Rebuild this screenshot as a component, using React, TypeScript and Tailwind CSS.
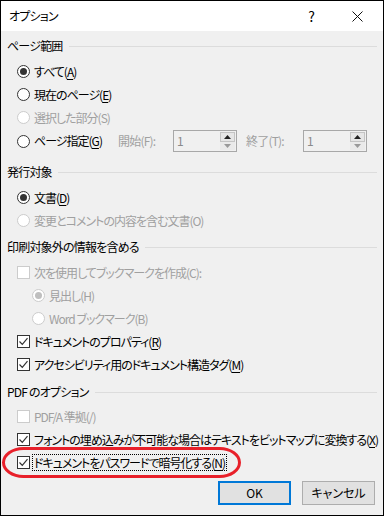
import React from "react";

function Key({ k }: { k: string }) {
  return (
    <>
      (<span className="underline underline-offset-2">{k}</span>)
    </>
  );
}

function Heading({ title, className = "" }: { title: string; className?: string }) {
  return (
    <div className={`flex h-[22px] items-center ${className}`}>
      <span className="whitespace-pre text-[12px] text-black">{title}</span>
      <div className="ml-[6px] h-px flex-1 bg-[#dcdcdc]" />
    </div>
  );
}

function Radio({ checked = false, disabled = false }: { checked?: boolean; disabled?: boolean }) {
  return (
    <span
      className={`flex h-[13px] w-[13px] shrink-0 items-center justify-center rounded-full border bg-white ${
        disabled ? "border-[#cccccc]" : "border-[#333333]"
      }`}
    >
      {checked && (
        <span
          className={`h-[7px] w-[7px] rounded-full ${disabled ? "bg-[#bfbfbf]" : "bg-[#333333]"}`}
        />
      )}
    </span>
  );
}

function Check({ checked = false, disabled = false }: { checked?: boolean; disabled?: boolean }) {
  return (
    <span
      className={`flex h-[13px] w-[13px] shrink-0 items-center justify-center border bg-white ${
        disabled ? "border-[#cccccc]" : "border-[#333333]"
      }`}
    >
      {checked && (
        <svg width="11" height="11" viewBox="0 0 11 11">
          <path d="M1.5 5.5 L4.3 8.3 L9.5 2.2" fill="none" stroke="#333333" strokeWidth="1.2" />
        </svg>
      )}
    </span>
  );
}

function Row({
  children,
  control,
  disabled = false,
  indent = "ml-[10px]",
  className = "",
}: {
  children: React.ReactNode;
  control: React.ReactNode;
  disabled?: boolean;
  indent?: string;
  className?: string;
}) {
  return (
    <div className={`flex h-[23px] items-center ${indent} ${className}`}>
      {control}
      <span
        className={`ml-[4px] whitespace-pre text-[12px] tracking-[-1px] ${disabled ? "text-[#a0a0a0]" : "text-black"}`}
      >
        {children}
      </span>
    </div>
  );
}

function Spin({ className = "" }: { className?: string }) {
  return (
    <div className={`flex h-[22px] w-[64px] shrink-0 items-stretch border border-[#a8a8a8] bg-[#f0f0f0] ${className}`}>
      <span className="flex flex-1 items-center pl-[3px] text-[12px] text-[#8a8a8a]">1</span>
      <div className="my-[1px] mr-[1px] flex w-[15px] flex-col">
        <div className="flex flex-1 items-center justify-center border border-[#c4c4c4] bg-[#e6e6e6]">
          <svg width="7" height="4" viewBox="0 0 7 4">
            <path d="M0 4 L3.5 0 L7 4 Z" fill="#222222" />
          </svg>
        </div>
        <div className="flex flex-1 items-center justify-center bg-[#eaeaea]">
          <svg width="7" height="4" viewBox="0 0 7 4">
            <path d="M0 0 L7 0 L3.5 4 Z" fill="#9a9a9a" />
          </svg>
        </div>
      </div>
    </div>
  );
}

export default function App() {
  return (
    <div className="flex h-[516px] w-[384px] flex-col overflow-hidden border border-black bg-[#f0f0f0] font-['Noto_Sans_CJK_JP','Noto_Sans',sans-serif] tracking-[-0.8px] [font-feature-settings:'palt']">
      <div className="flex h-[30px] shrink-0 items-center bg-white pl-[8px]">
        <span className="text-[12px] text-black">オプション</span>
        <span className="ml-auto mr-[38px] text-[14px] text-black">?</span>
        <svg className="mr-[20px]" width="11" height="11" viewBox="0 0 11 11">
          <path d="M0.5 0.5 L10.5 10.5 M10.5 0.5 L0.5 10.5" stroke="#111111" strokeWidth="1" />
        </svg>
      </div>

      <div className="flex flex-1 flex-col px-[6px] pt-[4px]">
        <Heading title="ページ範囲" />
        <Row className="mt-[3px]" control={<Radio checked />}>
          すべて<Key k="A" />
        </Row>
        <Row control={<Radio />}>
          現在のページ<Key k="E" />
        </Row>
        <Row control={<Radio disabled />} disabled>
          選択した部分(S)
        </Row>
        <div className="flex h-[24px] items-center">
          <div className="ml-[10px] flex w-[101px] items-center">
            <Radio />
            <span className="ml-[4px] whitespace-nowrap text-[12px] tracking-[-1px] text-black">
              ページ指定<Key k="G" />
            </span>
          </div>
          <span className="w-[55px] text-[12px] text-[#a0a0a0]">開始(F):</span>
          <Spin />
          <span className="ml-[9px] w-[57px] text-[12px] text-[#a0a0a0]">終了(T):</span>
          <Spin />
        </div>

        <Heading title="発行対象" className="mt-[8px]" />
        <Row className="mt-[3px]" control={<Radio checked />}>
          文書<Key k="D" />
        </Row>
        <Row control={<Radio disabled />} disabled>
          変更とコメントの内容を含む文書(O)
        </Row>

        <Heading title="印刷対象外の情報を含める" className="mt-[4px]" />
        <Row className="mt-[3px]" control={<Check disabled />} disabled>
          次を使用してブックマークを作成(C):
        </Row>
        <Row indent="ml-[25px]" control={<Radio checked disabled />} disabled>
          見出し(H)
        </Row>
        <Row indent="ml-[25px]" control={<Radio disabled />} disabled>
          Word ブックマーク(B)
        </Row>
        <Row control={<Check checked />}>
          ドキュメントのプロパティ<Key k="R" />
        </Row>
        <Row control={<Check checked />}>
          アクセシビリティ用のドキュメント構造タグ<Key k="M" />
        </Row>

        <Heading title="PDF のオプション" className="mt-[5px]" />
        <Row className="mt-[2px]" control={<Check disabled />} disabled>
          PDF/A 準拠(/)
        </Row>
        <Row control={<Check checked />}>
          フォントの埋め込みが不可能な場合はテキストをビットマップに変換する<Key k="X" />
        </Row>
        <div className="relative ml-[10px] flex h-[23px] items-center">
          <Check checked />
          <span className="ml-[2px] whitespace-nowrap border border-dotted border-black px-[1px] text-[12px] leading-[15px] tracking-[-1px] text-black">
            ドキュメントをパスワードで暗号化する<Key k="N" />
          </span>
          <div className="pointer-events-none absolute left-[-15px] top-[-4px] h-[31px] w-[239px] rounded-[22px/16px] border-[3px] border-[#e8202a]" />
        </div>

        <div className="mt-[7px] flex justify-end gap-[11px] pr-[2px] tracking-normal">
          <button className="flex h-[24px] w-[73px] items-center justify-center border-2 border-[#0078d7] bg-[#e1e1e1] text-[12px] text-black">
            OK
          </button>
          <button className="flex h-[24px] w-[73px] items-center justify-center border border-[#adadad] bg-[#e1e1e1] text-[12px] text-black">
            キャンセル
          </button>
        </div>
      </div>
    </div>
  );
}
